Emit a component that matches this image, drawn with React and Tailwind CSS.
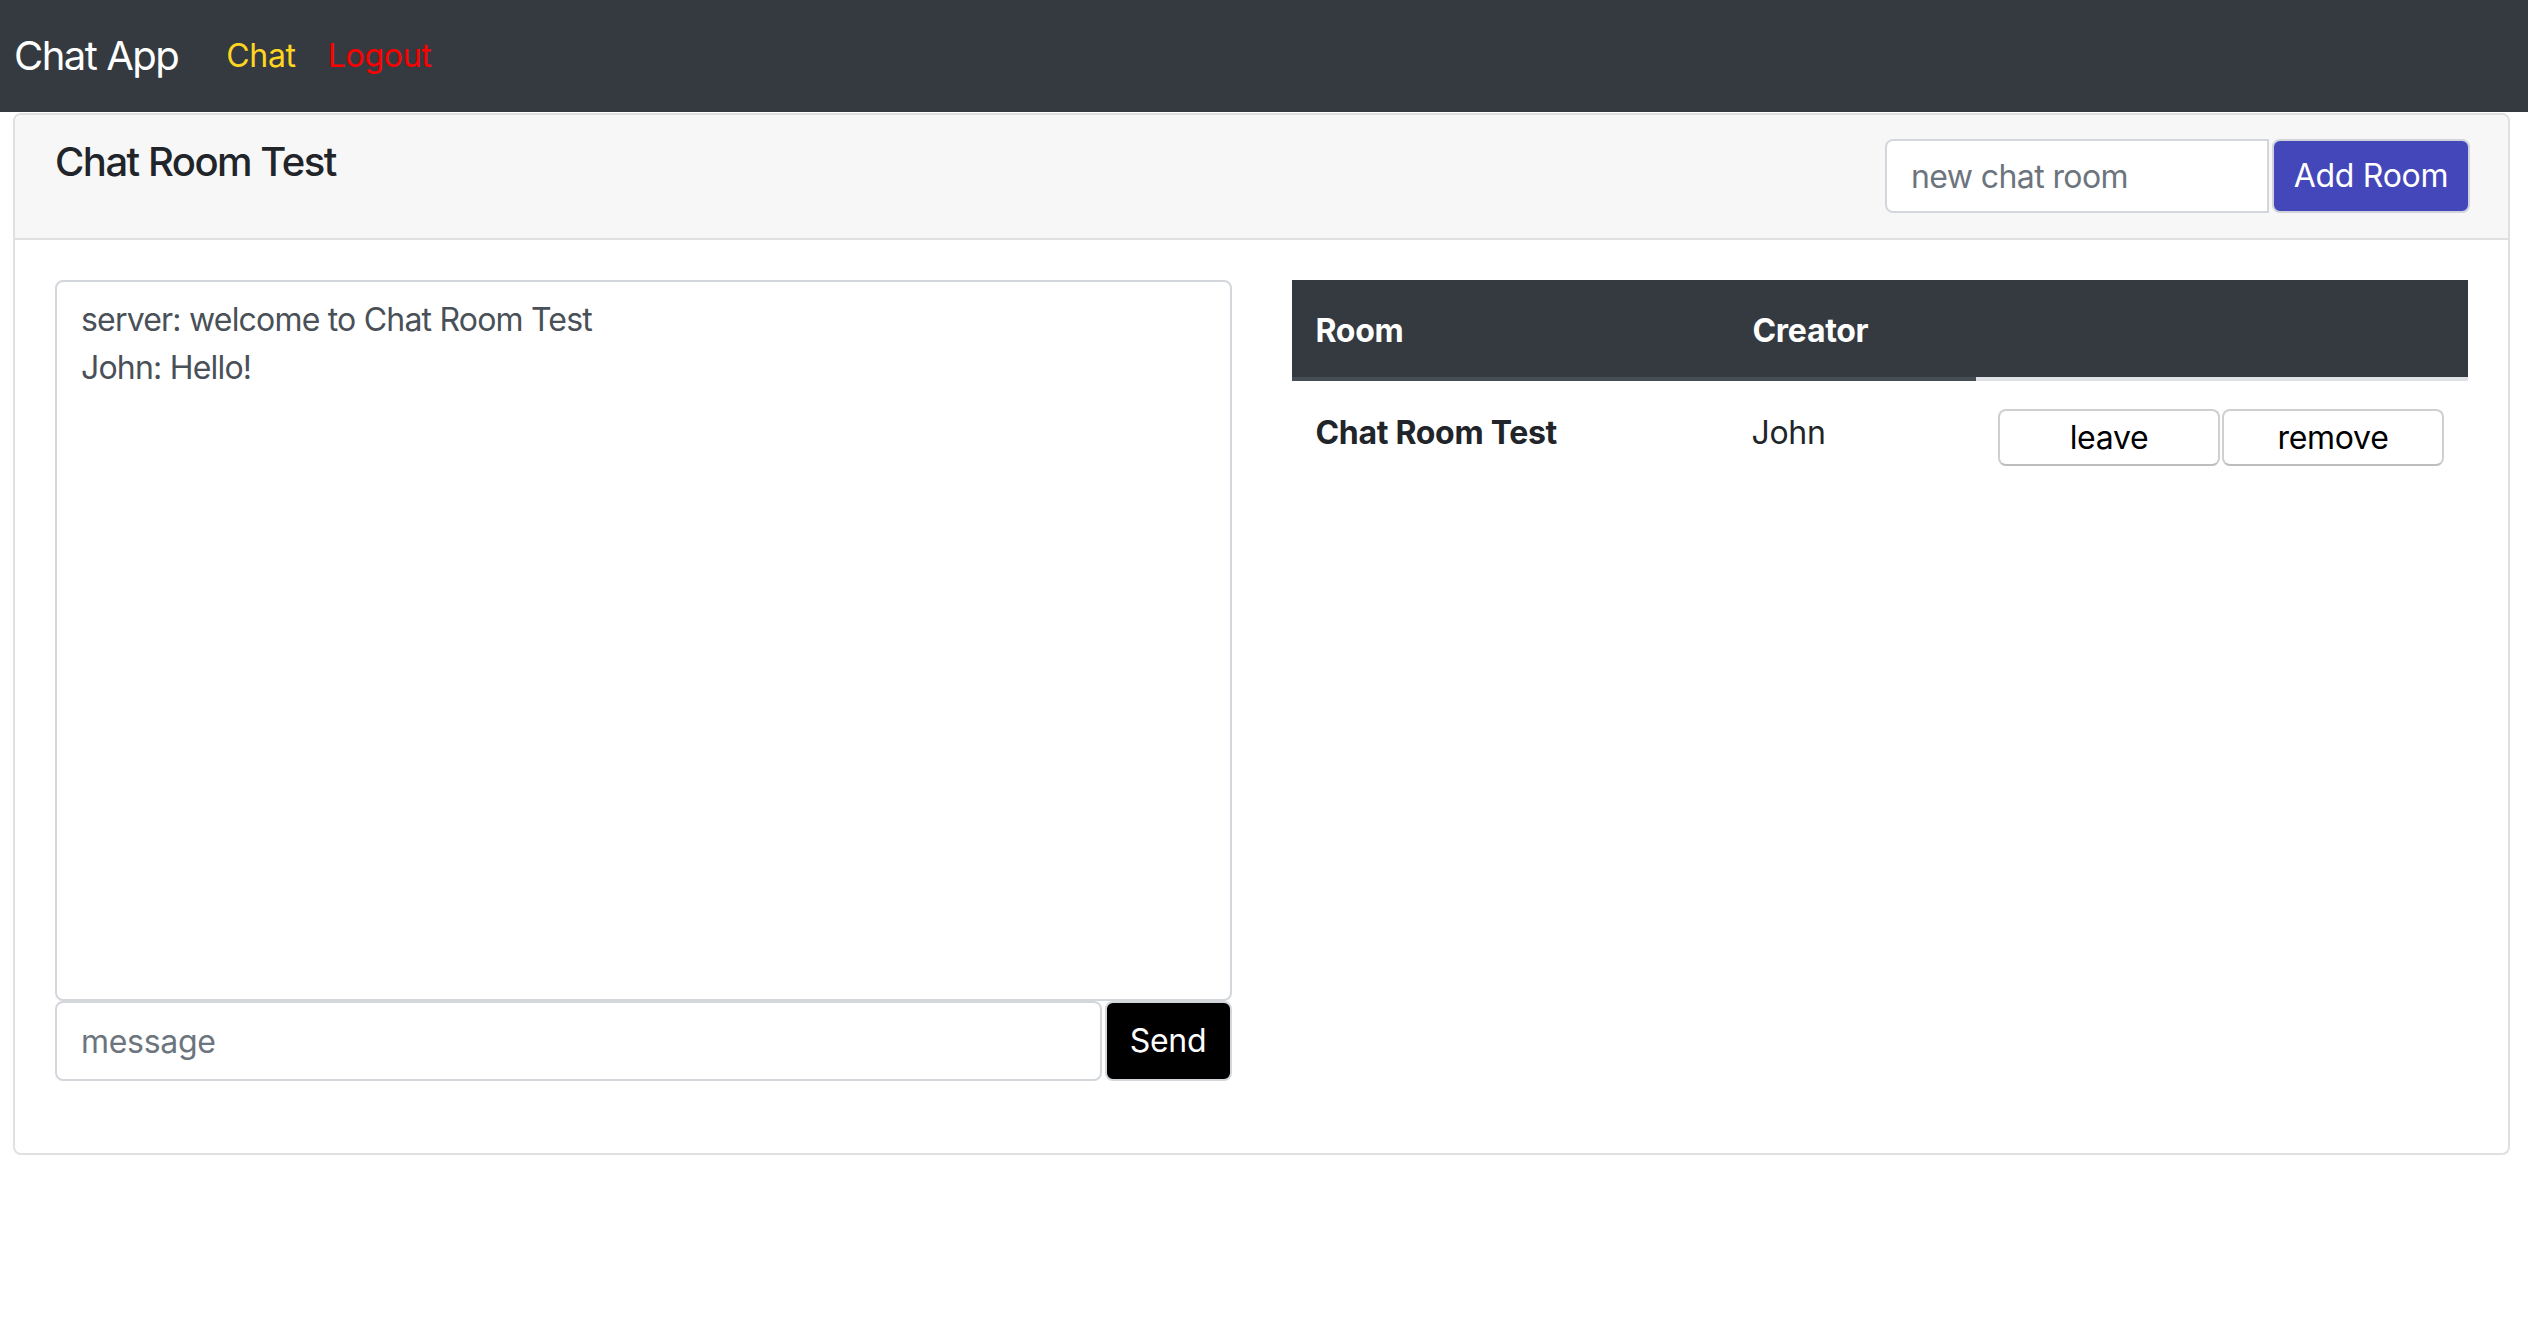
export default function App() {
  return (
    <div className="min-h-screen bg-white font-['Inter','Liberation_Sans',sans-serif] text-[#212529]">
      {/* Navbar */}
      <nav className="h-[112px] bg-[#343a40] flex items-center px-[14px]">
        <span className="text-[40px] leading-[60px] text-white mr-[32px] tracking-[-1.5px]">Chat App</span>
        <a className="text-[32px] px-[16px] text-[#ffd61f] tracking-[-0.3px]">Chat</a>
        <a className="text-[32px] px-[16px] text-[#ff0000] tracking-[-0.3px]">Logout</a>
      </nav>

      {/* Card */}
      <div className="ml-[13px] mr-[18px] mt-[1px] border-2 border-[#e0e0e0] rounded-[8px]">
        <div className="bg-[#f7f7f7] border-b-2 border-[#e0e0e0] rounded-t-[8px] px-[40px] py-[25px] flex justify-between items-start">
          <h5 className="text-[40px] leading-[48px] font-medium tracking-[-1.5px] -mt-[2px]">Chat Room Test</h5>
          <div className="flex -mt-[1px] mr-[-2px]">
            <input
              className="w-[384px] h-[74px] bg-white border-2 border-[#d3d7dc] rounded-l-[8px] px-[24px] text-[32px] text-[#495057] placeholder:text-[#6c757d] outline-none tracking-[-0.6px]"
              placeholder="new chat room"
            />
            <button className="ml-[3px] w-[198px] h-[74px] bg-[#4447b9] border-2 border-[#d0d3dc] rounded-[8px] text-white text-[32px] tracking-[-0.3px]">
              Add Room
            </button>
          </div>
        </div>

        <div className="grid grid-cols-2 gap-[60px] px-[40px] pt-[40px] pb-[72px]">
          {/* Chat */}
          <div className="flex flex-col">
            <div className="h-[721px] border-2 border-[#d3d7dc] rounded-[8px] px-[24px] pt-[14px] text-[32px] leading-[48px] text-[#495057] tracking-[-0.8px]">
              <div>server: welcome to Chat Room Test</div>
              <div>John: Hello!</div>
            </div>
            <div className="flex">
              <input
                className="flex-1 h-[80px] border-2 border-[#d3d7dc] rounded-[8px] px-[24px] text-[32px] text-[#495057] placeholder:text-[#6c757d] outline-none tracking-[-0.3px]"
                placeholder="message"
              />
              <button className="ml-[3px] w-[127px] h-[80px] bg-black rounded-[8px] border-2 border-[#d3d7dc] text-white text-[32px] tracking-[-0.3px]">
                Send
              </button>
            </div>
          </div>

          {/* Rooms table */}
          <div>
            <div className="flex bg-[#343a40] text-white text-[32px] font-bold leading-[48px] tracking-[-0.3px]">
              <div className="w-[437px] px-[24px] pt-[27px] pb-[22px] border-b-4 border-[#454d55]">Room</div>
              <div className="w-[247px] px-[24px] pt-[27px] pb-[22px] border-b-4 border-[#454d55]">Creator</div>
              <div className="flex-1 border-b-4 border-[#dee2e6]"></div>
            </div>
            <div className="flex text-[32px] leading-[48px] tracking-[-0.3px]">
              <div className="w-[437px] px-[24px] pt-[28px] font-bold">Chat Room Test</div>
              <div className="w-[247px] px-[24px] pt-[28px]">John</div>
              <div className="flex-1 px-[24px] pt-[28px] flex gap-[2px]">
                <button className="w-[222px] h-[57px] bg-white border-2 border-[#cfcfcf] border-b-[#bdbdbd] rounded-[8px] text-[32px] leading-[40px] text-black">
                  leave
                </button>
                <button className="w-[222px] h-[57px] bg-white border-2 border-[#cfcfcf] border-b-[#bdbdbd] rounded-[8px] text-[32px] leading-[40px] text-black">
                  remove
                </button>
              </div>
            </div>
          </div>
        </div>
      </div>
    </div>
  );
}
